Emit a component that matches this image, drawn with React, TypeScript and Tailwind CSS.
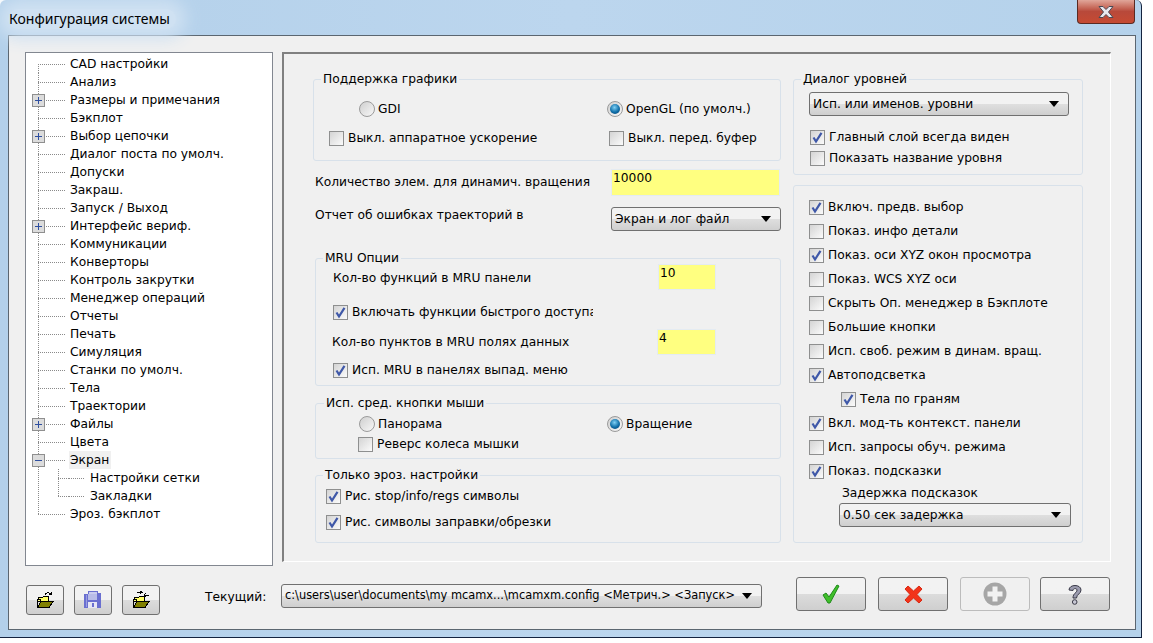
import React from "react";

const FONT = "font-['DejaVu_Sans','Noto_Sans',sans-serif]";

const tree: { t: string; exp?: "+" | "-"; child?: boolean; last?: boolean; sel?: boolean }[] = [
  { t: "CAD настройки" },
  { t: "Анализ" },
  { t: "Размеры и примечания", exp: "+" },
  { t: "Бэкплот" },
  { t: "Выбор цепочки", exp: "+" },
  { t: "Диалог поста по умолч." },
  { t: "Допуски" },
  { t: "Закраш." },
  { t: "Запуск / Выход" },
  { t: "Интерфейс вериф.", exp: "+" },
  { t: "Коммуникации" },
  { t: "Конверторы" },
  { t: "Контроль закрутки" },
  { t: "Менеджер операций" },
  { t: "Отчеты" },
  { t: "Печать" },
  { t: "Симуляция" },
  { t: "Станки по умолч." },
  { t: "Тела" },
  { t: "Траектории" },
  { t: "Файлы", exp: "+" },
  { t: "Цвета" },
  { t: "Экран", exp: "-", sel: true },
  { t: "Настройки сетки", child: true },
  { t: "Закладки", child: true, last: true },
  { t: "Эроз. бэкплот", last: true },
];

function TreeRow({ t, exp, child, last, sel, first }: { t: string; exp?: "+" | "-"; child?: boolean; last?: boolean; sel?: boolean; first?: boolean }) {
  return (
    <div className="flex h-[18px] items-center">
      <svg width="43" height="18" className="shrink-0" shapeRendering="crispEdges">
        <g stroke="#8a8a8a" strokeDasharray="1 1" fill="none">
          {child ? (
            <>
              <path d="M12.5 0V18" />
              <path d={last ? "M32.5 0V9" : "M32.5 0V18"} />
              <path d="M32 9.5H43" />
            </>
          ) : (
            <>
              <path d={last ? "M12.5 0V9" : first ? "M12.5 9V18" : "M12.5 0V18"} />
              <path d="M12 9.5H40" />
            </>
          )}
        </g>
        {exp && (
          <g>
            <rect x="6.5" y="3.5" width="12" height="12" fill="#dcdcdc" stroke="#8f8f8f" />
            <path d="M9 9.5H16" stroke="#2f4f9f" />
            {exp === "+" && <path d="M12.5 6V13" stroke="#2f4f9f" />}
          </g>
        )}
      </svg>
      {child && (
        <svg width="20" height="18" className="shrink-0" shapeRendering="crispEdges">
          <path d="M0 9.5H16" stroke="#8a8a8a" strokeDasharray="1 1" />
        </svg>
      )}
      <span className={`h-[18px] leading-[18px] px-[1px] ${sel ? "bg-[#f0f0f0] pr-[2px]" : ""}`}>{t}</span>
    </div>
  );
}

function Check({ on, label, className = "", clip }: { on?: boolean; label: string; className?: string; clip?: string }) {
  return (
    <div className={`flex items-center gap-[4px] whitespace-nowrap ${className}`}>
      <span className="relative flex h-[15px] w-[15px] shrink-0 items-center justify-center border border-[#8e8f8f] bg-gradient-to-br from-[#d4d4d4] to-[#fbfbfb]">
        {on && (
          <svg width="13" height="13" viewBox="0 0 13 13">
            <path d="M2.5 6.5 5 10.5 10.5 1.8" fill="none" stroke="#3f58a8" strokeWidth="2.2" />
          </svg>
        )}
      </span>
      <span className={clip ?? ""}>{label}</span>
    </div>
  );
}

function Radio({ on, label, className = "" }: { on?: boolean; label: string; className?: string }) {
  return (
    <div className={`flex items-center gap-[3px] whitespace-nowrap ${className}`}>
      <span className="flex h-[16px] w-[16px] shrink-0 items-center justify-center rounded-full border border-[#9a9a9a] bg-gradient-to-br from-[#cfcfcf] to-[#f8f8f8]">
        {on && <span className="h-[10px] w-[10px] rounded-full bg-[radial-gradient(circle_at_45%_35%,#7fd0f5,#0f6ea8_55%,#0a3f70)]" />}
      </span>
      <span>{label}</span>
    </div>
  );
}

function Select({ value, className = "", textClass = "" }: { value: string; className?: string; textClass?: string }) {
  return (
    <div className={`flex items-center justify-between rounded-[3px] border border-[#707070] bg-gradient-to-b from-[#f2f2f2] from-50% via-[#dfdfdf] via-50% to-[#cfcfcf] pl-[3px] pr-[9px] whitespace-nowrap ${className}`}>
      <span className={textClass}>{value}</span>
      <svg width="10" height="6" className="shrink-0"><path d="M0 0H10L5 6Z" fill="#000" /></svg>
    </div>
  );
}

function YellowInput({ value, className = "" }: { value: string; className?: string }) {
  return (
    <div className={`border border-[#e4ebf2] bg-[#ffff80] pl-[1px] leading-[17px] ${className}`}>{value}</div>
  );
}

function Group({ legend, className = "", legendOffset, children }: { legend: string; className?: string; legendOffset: string; children: React.ReactNode }) {
  return (
    <fieldset className={`rounded-[3px] border border-[#d8e1ea] ${className}`}>
      <legend className={`h-[16px] px-[2px] leading-[16px] ${legendOffset}`}>{legend}</legend>
      {children}
    </fieldset>
  );
}

function ToolButton({ children, className = "" }: { children: React.ReactNode; className?: string }) {
  return (
    <div className={`flex items-center justify-center rounded-[3px] border border-[#707070] bg-gradient-to-b from-[#f2f2f2] from-50% via-[#dcdcdc] via-50% to-[#cfcfcf] ${className}`}>
      {children}
    </div>
  );
}

function Folder({ arrows }: { arrows?: "swap" | "out" }) {
  return (
    <svg width="18" height="18" viewBox="0 0 18 18" shapeRendering="crispEdges">
      <path d="M2.5 6.5H6.5L7.5 5.5H12.5V10H2.5Z" fill="#ffff66" stroke="#000" />
      <path d="M1.5 16.5V8.5H4V10H2" fill="#ffff80" stroke="#000" />
      <path d="M1.5 16.5L5 10.5H17L13 16.5Z" fill="#808000" stroke="#000" />
      {arrows === "out" && <path d="M9 4C10 1.5 13 1 15 3M15.5 0.5V3.5H12.5" fill="none" stroke="#000" />}
      {arrows === "swap" && <path d="M5 1.5H10M8 0L10 1.5 8 3M17 4H12M14 2.5L12 4 14 5.5" fill="none" stroke="#000" />}
    </svg>
  );
}

function Save() {
  return (
    <svg width="18" height="18" viewBox="0 0 18 18" shapeRendering="crispEdges">
      <path d="M0 3H4V0H14V2H17V17H0Z" fill="#6a6fd0" />
      <rect x="5" y="1" width="8" height="2" fill="#c9ccef" />
      <rect x="4" y="3" width="9" height="6" fill="#b8bce8" />
      <rect x="4" y="11" width="9" height="6" fill="#e6e6f4" />
      <rect x="8" y="12" width="2" height="4" fill="#6a6fd0" />
      <rect x="2" y="4" width="1" height="12" fill="#9a9ee0" />
    </svg>
  );
}

export default function App() {
  return (
    <div className={`${FONT} h-[643px] w-[1153px] overflow-hidden bg-white text-[12.25px] text-black`}>
      <div className="relative h-[638px] w-[1142px] rounded-tl-[6px] rounded-tr-[6px] border-r border-b border-[#14233f] bg-gradient-to-r from-[#b3d0ea] via-[#bcd6ee] to-[#b5d2eb] pl-[8px] pr-[6px]">
        <div className="flex h-[35px] items-center">
          <span className="rounded-[12px] bg-[#cfe1f2] pl-[1px] pr-[6px] font-['Noto_Sans',sans-serif] text-[14px] leading-[20px] mt-[2px] shadow-[0_0_16px_10px_#cfe1f2]">Конфигурация системы</span>
        </div>
        <div className="absolute right-[6px] top-0 flex h-[24px] w-[58px] items-center justify-center rounded-b-[4px] border border-t-0 border-[#5a2a22] bg-gradient-to-b from-[#e0a69a] from-0% via-[#b8493a] via-50% to-[#c64a32]">
          <svg width="22" height="14" viewBox="0 0 22 14">
            <path d="M4 1.5H8L11 4.5 14 1.5H18L13.5 7 18 12.5H14L11 9.5 8 12.5H4L8.5 7Z" fill="#e8e8ee" stroke="#4a4a55" strokeWidth="1" />
          </svg>
        </div>

        <div className="h-[595px] w-[1128px] border border-[#5b6670] bg-[#f0f0f0] pl-[16px] pt-[16px]">
          <div className="flex items-start gap-[9px]">
            <div className="h-[514px] w-[248px] shrink-0 border border-[#828790] bg-white pt-[2px]">
              {tree.map((r, i) => (
                <TreeRow key={r.t} {...r} first={i === 0} />
              ))}
            </div>

            <div className="flex h-[510px] w-[829px] shrink-0 gap-[12px] border-t-2 border-l-2 border-r border-b border-t-[#808080] border-l-[#808080] border-r-white border-b-white pl-[29px] pt-[17px]">
              <div className="w-[468px] shrink-0">
                <Group legend="Поддержка графики" legendOffset="ml-[7px]" className="h-[90px]">
                  <div className="flex h-[31px] items-end">
                    <Radio label="GDI" className="ml-[45px] w-[248px]" />
                    <Radio on label="OpenGL (по умолч.)" />
                  </div>
                  <div className="mt-[11px] flex items-center">
                    <Check label="Выкл. аппаратное ускорение" className="ml-[15px] w-[280px]" />
                    <Check label="Выкл. перед. буфер" />
                  </div>
                </Group>

                <div className="ml-[2px] mt-[8px] flex h-[27px] items-center">
                  <span className="w-[296px]">Количество элем. для динамич. вращения</span>
                  <YellowInput value="10000" className="h-[27px] w-[169px]" />
                </div>
                <div className="ml-[2px] mt-[11px] flex h-[24px] items-center">
                  <span className="-mt-[8px] w-[296px]">Отчет об ошибках траекторий в</span>
                  <Select value="Экран и лог файл" className="h-[24px] w-[170px]" />
                </div>

                <Group legend="MRU Опции" legendOffset="ml-[7px]" className="ml-[2px] mt-[19px] h-[136px]">
                  <div className="-mt-[2px] flex h-[26px] items-center">
                    <span className="ml-[17px] mt-[3px] w-[325px]">Кол-во функций в MRU панели</span>
                    <YellowInput value="10" className="h-[26px] w-[58px]" />
                  </div>
                  <Check on label="Включать функции быстрого доступа" className="ml-[17px] mt-[14px] h-[16px]" clip="w-[241px] overflow-hidden" />
                  <div className="mt-[9px] flex h-[26px] items-center">
                    <span className="ml-[16px] w-[325px]">Кол-во пунктов в MRU полях данных</span>
                    <YellowInput value="4" className="h-[26px] w-[59px]" />
                  </div>
                  <Check on label="Исп. MRU в панелях выпад. меню" className="ml-[17px] mt-[7px] h-[16px]" />
                </Group>

                <Group legend="Исп. сред. кнопки мыши" legendOffset="ml-[8px]" className="ml-[2px] mt-[9px] h-[64px]">
                  <div className="mt-[4px] flex items-center">
                    <Radio label="Панорама" className="ml-[43px] w-[248px]" />
                    <Radio on label="Вращение" />
                  </div>
                  <Check label="Реверс колеса мышки" className="ml-[42px] mt-[2px]" />
                </Group>

                <Group legend="Только эроз. настройки" legendOffset="ml-[7px]" className="ml-[2px] mt-[8px] h-[76px]">
                  <Check on label="Рис. stop/info/regs символы" className="ml-[10px] mt-[4px]" />
                  <Check on label="Рис. символы заправки/обрезки" className="ml-[10px] mt-[8px]" />
                </Group>
              </div>

              <div className="w-[290px] shrink-0">
                <Group legend="Диалог уровней" legendOffset="ml-[7px]" className="h-[104px]">
                  <Select value="Исп. или именов. уровни" className="ml-[15px] mt-[5px] h-[24px] w-[260px]" />
                  <Check on label="Главный слой всегда виден" className="ml-[16px] mt-[12px]" />
                  <Check label="Показать название уровня" className="ml-[16px] mt-[3px]" />
                </Group>
                <div className="mt-[10px] h-[358px] rounded-[3px] border border-[#d8e1ea] pl-[15px] pt-[9px]">
                  {[
                    ["Включ. предв. выбор", true],
                    ["Показ. инфо детали", false],
                    ["Показ. оси XYZ окон просмотра", true],
                    ["Показ. WCS XYZ оси", false],
                    ["Скрыть Оп. менеджер в Бэкплоте", false],
                    ["Большие кнопки", false],
                    ["Исп. своб. режим в динам. вращ.", false],
                    ["Автоподсветка", true],
                  ].map(([l, on]) => (
                    <Check key={l as string} on={on as boolean} label={l as string} className="h-[24px]" />
                  ))}
                  <Check on label="Тела по граням" className="ml-[32px] h-[24px]" />
                  {[
                    ["Вкл. мод-ть контекст. панели", true],
                    ["Исп. запросы обуч. режима", false],
                    ["Показ. подсказки", true],
                  ].map(([l, on]) => (
                    <Check key={l as string} on={on as boolean} label={l as string} className="h-[24px]" />
                  ))}
                  <div className="ml-[33px] mt-[2px] h-[16px] leading-[16px]">Задержка подсказок</div>
                  <Select value="0.50 сек задержка" className="ml-[30px] mt-[2px] h-[24px] w-[232px]" />
                </div>
              </div>
            </div>
          </div>

          <div className="mt-[11px] flex items-start">
            <div className="ml-[1px] mt-[8px] flex gap-[10px]">
              <ToolButton className="h-[30px] w-[38px]"><Folder arrows="out" /></ToolButton>
              <ToolButton className="h-[30px] w-[38px]"><Save /></ToolButton>
              <ToolButton className="h-[30px] w-[38px]"><Folder arrows="swap" /></ToolButton>
            </div>
            <span className="ml-[45px] mt-[12px] w-[76px] leading-[16px]">Текущий:</span>
            <Select value="c:\users\user\documents\my mcamx...\mcamxm.config <Метрич.> <Запуск>" textClass="text-[11.4px]" className="mt-[7px] h-[24px] w-[481px]" />
            <div className="ml-[34px] flex gap-[12px]">
              <ToolButton className="h-[34px] w-[70px]">
                <svg width="18" height="20" viewBox="0 0 18 20"><path d="M1 11 4 9 7 13 15 1 17 2 8 19 6 19Z" fill="#3fbf2a" stroke="#1f8a1a" /></svg>
              </ToolButton>
              <ToolButton className="h-[34px] w-[70px]">
                <svg width="19" height="19" viewBox="0 0 19 19"><path d="M4 1 9.5 6 15 1 18 4 13 9.5 18 15 15 18 9.5 13 4 18 1 15 6 9.5 1 4Z" fill="#f2331a" stroke="#d82a14" /></svg>
              </ToolButton>
              <div className="flex h-[34px] w-[70px] items-center justify-center rounded-[3px] border border-[#bcbcbc] bg-[#f0f0f0]">
                <svg width="24" height="24" viewBox="0 0 24 24"><circle cx="12" cy="12" r="11.5" fill="#a6a6a6" /><path d="M9.5 4.5H14.5V9.5H19.5V14.5H14.5V19.5H9.5V14.5H4.5V9.5H9.5Z" fill="#f2f2f2" /></svg>
              </div>
              <ToolButton className="ml-[-2px] h-[34px] w-[70px]">
                <svg width="16" height="21" viewBox="0 0 16 21"><path d="M2 6C2 0 14 0 14 6 14 10 9.5 10 9.5 14H6C6 9 10 9 10 6 10 4 6 4 6 6.5Z" fill="#9c9caf" stroke="#3a3a48" /><circle cx="7.7" cy="18" r="2.3" fill="#c8c8d4" stroke="#3a3a48" /></svg>
              </ToolButton>
            </div>
          </div>
        </div>
      </div>
    </div>
  );
}
